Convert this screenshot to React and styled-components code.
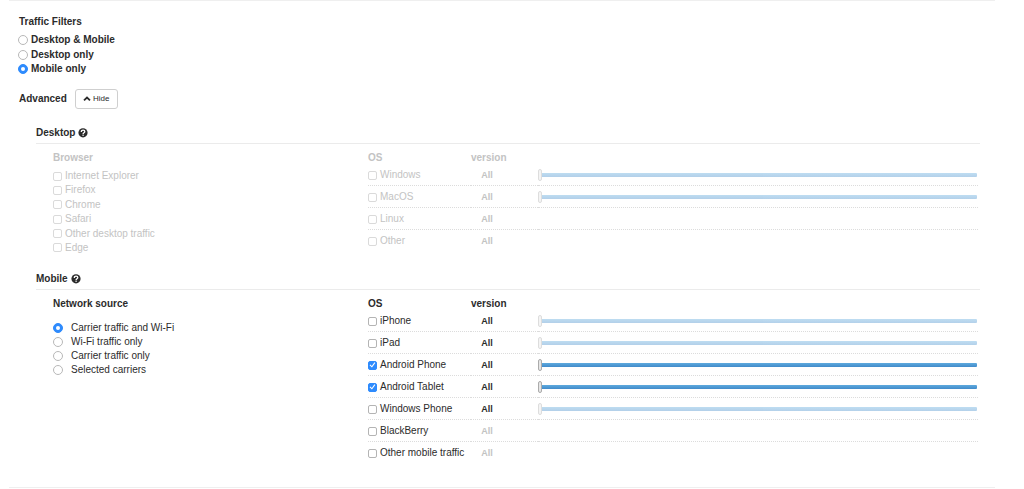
import React, { useState } from "react";
import styled, { createGlobalStyle } from "styled-components";

const ink = "#2b2b2b";
const faded = "#c3c3c3";
const blue = "#2e8bfd";

const GlobalStyle = createGlobalStyle`
  *, *::before, *::after { box-sizing: border-box; }
  body {
    margin: 0;
    background: #fff;
    color: ${ink};
    font: 10px/14px "Liberation Sans", Arial, sans-serif;
  }
`;

const Panel = styled.main`
  margin: 0 29px 0 9px;
  padding: 15px 15px 23px 10px;
  border-top: 1px solid #efefef;
  border-bottom: 1px solid #efefef;
`;

const Title = styled.h2`
  margin: 0;
  font-size: 10px;
  line-height: 12px;
`;

const Choices = styled.div`
  display: flex;
  flex-direction: column;
  justify-content: space-between;
  min-height: ${(p) => p.$height || 0}px;
  margin-top: ${(p) => p.$top}px;
`;

const Choice = styled.label`
  display: flex;
  align-items: center;
  gap: ${(p) => p.$gap || 3}px;
  line-height: 14px;
  font-weight: ${(p) => (p.$bold ? 700 : 400)};
  white-space: nowrap;
`;

const Check = styled.input.attrs({ type: "checkbox" })`
  appearance: none;
  display: grid;
  place-content: center;
  flex: none;
  width: 9px;
  height: 9px;
  margin: 0;
  border: 1px solid #b4b4b4;
  border-radius: 2px;
  background: #fff;

  &:disabled { border-color: #dadada; }

  &:checked {
    border-color: ${blue};
    background: ${blue};
  }

  &:checked::after {
    content: "";
    width: 7px;
    height: 7px;
    background: #fff;
    clip-path: polygon(8% 54%, 20% 42%, 40% 64%, 78% 10%, 90% 20%, 42% 86%);
  }
`;

const Radio = styled.input.attrs({ type: "radio" })`
  appearance: none;
  display: grid;
  place-content: center;
  flex: none;
  width: 10px;
  height: 10px;
  margin: 0 0 0 ${(p) => p.$pull || 0}px;
  border: 1px solid #b8b8b8;
  border-radius: 50%;
  background: #fff;

  &:checked {
    border-color: ${blue};
    background: ${blue};
  }

  &:checked::after {
    content: "";
    width: 4px;
    height: 4px;
    border-radius: 50%;
    background: #fff;
  }
`;

const AdvancedBar = styled.div`
  display: flex;
  align-items: center;
  gap: 8px;
  margin-top: 13px;
`;

const ToggleButton = styled.button`
  display: flex;
  align-items: center;
  justify-content: center;
  gap: 2px;
  width: 43px;
  height: 20px;
  padding: 0;
  border: 1px solid #cfcfcf;
  border-radius: 3px;
  background: #fff;
  color: ${ink};
  font: 8px/12px "Liberation Sans", Arial, sans-serif;
`;

const Section = styled.section`
  margin: 18px 0 0 17px;
`;

const SectionTitle = styled.h3`
  display: flex;
  align-items: center;
  gap: 3px;
  margin: 0;
  padding-bottom: 4px;
  border-bottom: 1px solid #ebebeb;
  font-size: 10px;
  line-height: 12px;
`;

const Columns = styled.div`
  display: grid;
  grid-template-columns: 315px 1fr;
  align-items: start;
  padding: 7px 2px 0 17px;
  color: ${(p) => (p.$faded ? faded : "inherit")};
`;

const ColumnTitle = styled.h4`
  margin: 0;
  font-size: 10px;
  line-height: 13px;
`;

const OsTable = styled.table`
  width: 100%;
  table-layout: fixed;
  border-spacing: 0;

  th {
    height: 13px;
    padding: 0;
    line-height: 13px;
    text-align: left;
  }

  td {
    height: 22px;
    padding: 1px 0 0;
    border-bottom: 1px dotted #dcdcdc;
    vertical-align: middle;
  }

  tr:last-child td { border-bottom-color: transparent; }
`;

const NameHead = styled.th`
  width: 103px;
`;

const VersionHead = styled.th`
  width: 67px;
`;

const Version = styled.span`
  display: block;
  width: 32px;
  font-size: 9px;
  font-weight: 700;
  text-align: center;
  color: ${(p) => (p.$faded ? faded : "inherit")};
`;

const Slider = styled.input.attrs({ type: "range" })`
  appearance: none;
  display: block;
  width: calc(100% - 1px);
  height: 12px;
  margin: 0;
  background: transparent;
  opacity: ${(p) => (p.disabled ? 0.4 : 1)};

  &::-webkit-slider-runnable-track {
    height: 4px;
    border-radius: 1px;
    background: linear-gradient(#5eaade, #428bca);
  }

  &::-webkit-slider-thumb {
    appearance: none;
    width: 4px;
    height: 12px;
    margin-top: -4px;
    border: 1px solid #ababab;
    border-radius: 2px;
    background: #e6e6e6;
  }
`;

const Chevron = ({ down }) => (
  <svg width="8" height="8" viewBox="0 0 8 8" aria-hidden="true">
    <path
      d={down ? "M1 2.6 4 5.4 7 2.6" : "M1 5.4 4 2.6 7 5.4"}
      fill="none"
      stroke="currentColor"
      strokeWidth="1.8"
    />
  </svg>
);

const HelpIcon = () => (
  <svg width="10" height="10" viewBox="0 0 10 10" aria-hidden="true">
    <circle cx="5" cy="4.8" r="4.6" fill={ink} />
    <path
      d="M3.3 3.9C3.3 2.7 4 2.1 5.1 2.1S6.8 2.8 6.8 3.6C6.8 4.8 5.1 4.7 5.1 6"
      fill="none"
      stroke="#fff"
      strokeWidth="1.3"
    />
    <rect x="4.4" y="6.6" width="1.4" height="1.2" fill="#fff" />
  </svg>
);

const browsers = ["Internet Explorer", "Firefox", "Chrome", "Safari", "Other desktop traffic", "Edge"];
const devices = ["Desktop & Mobile", "Desktop only", "Mobile only"];
const networks = ["Carrier traffic and Wi-Fi", "Wi-Fi traffic only", "Carrier traffic only", "Selected carriers"];

const desktopSystems = [
  { name: "Windows", slider: true },
  { name: "MacOS", slider: true },
  { name: "Linux" },
  { name: "Other" },
];

const mobileSystems = [
  { name: "iPhone", slider: true },
  { name: "iPad", slider: true },
  { name: "Android Phone", slider: true },
  { name: "Android Tablet", slider: true },
  { name: "Windows Phone", slider: true },
  { name: "BlackBerry" },
  { name: "Other mobile traffic" },
];

function Systems({ items, disabled, initial = [] }) {
  const [picked, setPicked] = useState(initial);
  const toggle = (name) =>
    setPicked((now) => (now.includes(name) ? now.filter((n) => n !== name) : [...now, name]));

  return (
    <OsTable>
      <thead>
        <tr>
          <NameHead scope="col">OS</NameHead>
          <VersionHead scope="col">version</VersionHead>
          <th aria-label="Version range" />
        </tr>
      </thead>
      <tbody>
        {items.map(({ name, slider }) => (
          <tr key={name}>
            <td>
              <Choice>
                <Check disabled={disabled} checked={picked.includes(name)} onChange={() => toggle(name)} />
                {name}
              </Choice>
            </td>
            <td>
              <Version $faded={!slider}>All</Version>
            </td>
            <td>
              {slider && (
                <Slider
                  aria-label={`${name} version`}
                  min="0"
                  max="10"
                  defaultValue="0"
                  disabled={disabled || !picked.includes(name)}
                />
              )}
            </td>
          </tr>
        ))}
      </tbody>
    </OsTable>
  );
}

export default function App() {
  const [device, setDevice] = useState("Mobile only");
  const [network, setNetwork] = useState(networks[0]);
  const [open, setOpen] = useState(true);

  return (
    <>
      <GlobalStyle />
      <Panel>
        <Title>Traffic Filters</Title>
        <Choices $top={5} $height={43} role="radiogroup" aria-label="Traffic Filters">
          {devices.map((name) => (
            <Choice key={name} $bold>
              <Radio $pull={-1} name="device" checked={device === name} onChange={() => setDevice(name)} />
              {name}
            </Choice>
          ))}
        </Choices>

        <AdvancedBar>
          <Title>Advanced</Title>
          <ToggleButton type="button" aria-expanded={open} onClick={() => setOpen(!open)}>
            <Chevron down={!open} />
            {open ? "Hide" : "Show"}
          </ToggleButton>
        </AdvancedBar>

        {open && (
          <>
            <Section>
              <SectionTitle>
                Desktop <HelpIcon />
              </SectionTitle>
              <Columns $faded>
                <div>
                  <ColumnTitle>Browser</ColumnTitle>
                  <Choices $top={5} $height={86}>
                    {browsers.map((name) => (
                      <Choice key={name}>
                        <Check disabled />
                        {name}
                      </Choice>
                    ))}
                  </Choices>
                </div>
                <Systems items={desktopSystems} disabled />
              </Columns>
            </Section>

            <Section>
              <SectionTitle>
                Mobile <HelpIcon />
              </SectionTitle>
              <Columns>
                <div>
                  <ColumnTitle>Network source</ColumnTitle>
                  <Choices $top={11} role="radiogroup" aria-label="Network source">
                    {networks.map((name) => (
                      <Choice key={name} $gap={8}>
                        <Radio name="network" checked={network === name} onChange={() => setNetwork(name)} />
                        {name}
                      </Choice>
                    ))}
                  </Choices>
                </div>
                <Systems items={mobileSystems} initial={["Android Phone", "Android Tablet"]} />
              </Columns>
            </Section>
          </>
        )}
      </Panel>
    </>
  );
}
